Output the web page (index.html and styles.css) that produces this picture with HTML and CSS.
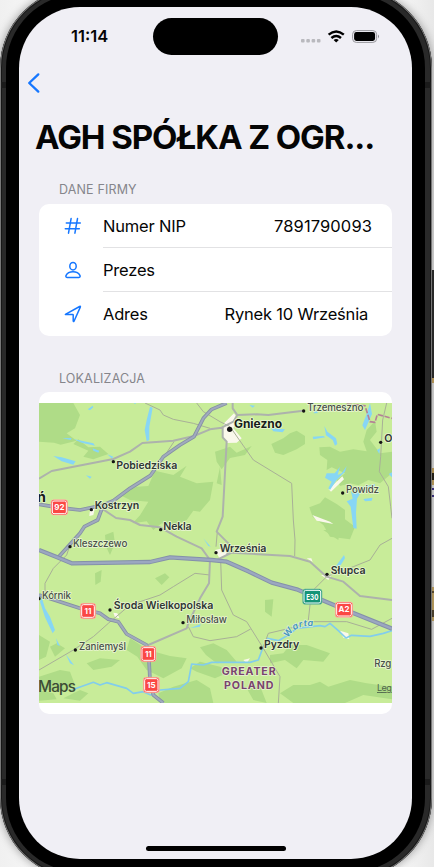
FILE: index.html
```html
<!DOCTYPE html>
<html lang="pl">
<head>
<meta charset="utf-8">
<title>Dane firmy</title>
<link rel="stylesheet" href="styles.css">
</head>
<body>
<div class="stage">
<div class="device">
<span class="seam seam-top"></span><span class="seam seam-bottom"></span>
<div class="bezel">
<main class="screen">
  <header class="status">
    <span class="time">11:14</span>
    <span class="island"></span>
    <svg class="indicators" viewBox="0 0 80 16" width="80" height="16">
      <g fill="#b9b9be"><rect x="1" y="11" width="3.6" height="3.5" rx="1"/><rect x="6.3" y="11" width="3.6" height="3.5" rx="1"/><rect x="11.6" y="11" width="3.6" height="3.5" rx="1"/><rect x="16.9" y="11" width="3.6" height="3.5" rx="1"/></g>
      <g fill="none" stroke="#000" stroke-width="2.4"><path d="M28.6 6.7Q36.2 .2 43.8 6.7"/><path d="M31.4 10Q36.2 5.8 41 10"/></g>
      <path d="M33.6 12Q36.2 9.8 38.8 12L36.2 14.6Z"/>
      <rect x="52.6" y="2.6" width="24" height="11.8" rx="3.7" fill="none" stroke="#98989d"/>
      <rect x="54.1" y="4.1" width="21" height="8.8" rx="2.3"/><path d="M78 6.6Q80 8.5 78 10.4Z" fill="#89898e"/>
    </svg>
  </header>
  <nav class="nav"><svg width="14" height="22" viewBox="0 0 14 22"><path d="M11.3 2.4 2.2 11l9.1 8.6" fill="none" stroke="#1677ff" stroke-width="2.3" stroke-linecap="round" stroke-linejoin="round"/></svg></nav>
  <h1 class="title">AGH SPÓŁKA Z OGR...</h1>
  <h2 class="section-label">DANE FIRMY</h2>
  <section class="card">
    <div class="row"><svg class="icon" viewBox="0 0 18 18"><path d="M7.1 1.6 4.5 16.2M13.5 1.6 10.9 16.2M2.3 6H16.3M1.3 11.8H15.3"/></svg><div class="cell"><span>Numer NIP</span><span class="nip">7891790093</span></div></div>
    <div class="row"><svg class="icon" viewBox="0 0 18 18"><ellipse cx="9" cy="5.2" rx="3.2" ry="3.7"/><path d="M3.1 16.4H14.9C16.2 16.4 16.4 15.4 15.9 14.4 14.7 12 12.2 10.8 9 10.8S3.3 12 2.1 14.4C1.6 15.4 1.8 16.4 3.1 16.4Z"/></svg><div class="cell"><span class="prezes">Prezes</span></div></div>
    <div class="row"><svg class="icon" viewBox="0 0 18 18"><path d="M1.4 9.4 15.6 1.5Q16.8 1 16.3 2.1L10 16.2Q9.3 17 9.2 16V9.9Q9.2 9.4 8.7 9.4Z"/></svg><div class="cell"><span>Adres</span><span class="address">Rynek 10 Września</span></div></div>
  </section>
  <h2 class="section-label second">LOKALIZACJA</h2>
  <section class="card map-card">
    <svg class="map" viewBox="27 129 1059 900">
      <rect x="27" y="129" width="1059" height="900" fill="#c8ec99"/>
      <g class="forest">
        <path d="M27 129H130L150 165 135 205 110 220 140 242 92 254 72 248 27 245ZM145 238 175 262 210 260 235 282 190 298 160 290 175 272 130 252Z"/>
        <path d="M375 332 430 345 470 317 450 350 500 370 550 365 540 420 510 455 490 452 470 480 430 498 395 490 370 510 350 484 308 490 330 466 355 425 300 420 270 405 320 380 355 378Z"/>
        <path d="M724 252 760 235 780 220 800 212 825 228 825 252 800 268 760 285 735 278Z"/>
        <path d="M868 262 900 260 930 275 970 268 1010 274 1000 245 1010 210 1035 183 1040 215 1020 240 1050 280 1086 275V340L1050 370 1015 360 985 376 960 370 930 378 920 360 945 340 905 322 890 330 892 300 870 285Z"/>
        <path d="M838 442 870 430 885 412 920 432 945 450 945 478 975 500 960 538 900 530 880 495 848 470Z"/>
        <path d="M555 275 600 260 620 278 665 258 645 285 600 294 575 328 560 305ZM570 320 560 370 575 375ZM225 525 250 515 255 550 240 585 228 560ZM195 640 215 630 212 665 196 675ZM375 655 405 640 418 652 395 675ZM705 720 730 718 725 770 705 755ZM880 510 930 510 925 540Z"/>
        <path d="M27 825 60 845 48 890 27 900ZM60 860 80 850 105 865 75 890ZM170 910 210 895 270 900 245 920 190 930ZM90 930 120 935 135 975 105 990 30 990 27 950Z"/>
        <path d="M300 835 355 870 420 888 470 895 455 925 400 955 350 930 322 890 290 870Z"/>
        <path d="M480 925 510 905 570 920 600 935 555 955 500 935ZM385 1000 430 980 500 960 540 985 550 1029H390ZM27 990 70 1000 80 1018 27 1022ZM510 862 550 850 590 870 620 905 560 910 528 885Z"/>
        <path d="M720 885 760 880 780 855 830 855 900 880 880 905 820 900 800 925 765 900 720 910Z"/>
        <path d="M750 1000 790 975 840 975 870 965 895 980 960 960 1010 970 1086 980V1018L1000 1005 945 1029H790ZM650 985 690 978 710 1029 670 1020ZM100 1015 150 990 175 1000 150 1022Z"/>
      </g>
      <g fill="#faf8ec">
        <path d="M582 190 612 160 622 175 610 205 635 235 620 248 590 249 577 225Z"/><path d="M180 450 195 443 190 465 178 468ZM250 758 262 760 268 775 255 772ZM555 570 585 563 600 580 570 598ZM873 645 905 645 895 660ZM830 595 844 595 848 606ZM896 388 937 349 942 358 903 395ZM847 465 900 485 910 492 860 482ZM930 812 940 833 958 838 955 820ZM640 900 660 895 650 910Z"/>
      </g>
      <g class="water">
        <path d="M360 140 368 143 358 200 358 240 350 244 344 210 350 180ZM173 148 188 137 190 142 180 151ZM97 235 125 234 122 240ZM130 237 190 250 195 257 155 248ZM188 265 208 272 205 278 190 272ZM70 288 95 292 137 304 130 314 95 304ZM168 346 185 350 180 356ZM308 126 322 126 315 132ZM232 283 250 290 246 296Z"/>
        <path d="M722 204 765 208 758 217 730 214ZM848 230 880 228 886 232 850 238ZM883 198 892 215 918 235 922 252 915 257 908 240 888 226ZM850 160 868 142 862 160ZM658 135 675 137 668 143ZM1020 129 1026 162 1005 210 997 196 1010 162Z"/>
        <path d="M885 353 890 340 914 340 930 320 923 345 935 340 950 318 945 335 920 360 900 390 895 385 905 365Z"/>
        <path d="M963 395 1000 380 1035 372 1034 381 995 393 981 416 978 458 980 506 970 504 962 440 950 424 968 416ZM1000 417 1028 413 1025 422 1005 424ZM1076 342 1086 337V352ZM1041 270 1050 265 1048 282Z"/>
        <path d="M35 712 45 745 60 770 75 810 68 820 45 772 30 725ZM78 835 90 858 82 855ZM107 882 132 916 120 910ZM918 618 942 585 945 595 928 622ZM520 535 542 560 535 558ZM480 805 512 792 510 800Z"/>
        <path class="river" d="M125 990 190 967 210 975 230 968 290 985 310 1000 340 995 362 1005 390 990 450 985 475 965 485 912 520 915 545 907 660 907 685 900 698 865 712 835 745 842 775 825 800 805 870 797 885 800 900 790 925 812 948 834 965 826 1020 829 1060 820 1086 812"/>
      </g>
      <path class="border" d="M950 132 1005 137 1020 185 1035 187 1042 163 1086 175"/>
      <g class="thin">
        <path d="M345 129 390 150 400 165 430 178 490 190 540 205M500 129 520 155 570 185 600 200 670 300 785 370 790 480 795 540 794 588M410 278 432 245"/>
        <path d="M1070 129 1058 180 1052 290 1048 335 1075 380 1082 440 1086 475M45 700 45 670 70 625 110 585 120 555M27 930 130 870 190 830 235 790 300 735 390 705 430 680 495 640 540 645"/>
        <path d="M572 600 575 690 610 765 650 785 700 865 750 950 745 1029M475 800 490 830 540 842 620 830 662 807M700 860 715 820 800 800 830 785 950 785 1025 808 1086 775M835 780 840 735 845 695 890 650 970 620 1020 600 1050 555 1086 535M562 515 558 560"/>
      </g>
      <g class="minor">
        <path d="M27 356 65 333 200 307 250 297 300 275 337 249 430 242 492 228 540 208 575 203 610 185 622 165 680 163 715 165 820 152M608 129V145L622 165M578 203V232L590 245 587 300 578 470 560 515 605 560 590 585M215 445 258 474 300 480 330 495 390 502 440 530 515 565 540 600 537 670 510 715 475 790 470 805 355 855"/>
        <path d="M560 600 605 578 780 588 840 605 890 650 940 665 990 708 1086 720"/>
      </g>
      <g><path class="major-edge" d="M27 433 87 443 150 450 220 435 250 422 300 385 362 346 400 290 450 255 492 230 520 175 545 148 590 129M220 435 203 480 163 500 150 520 85 592M27 705 150 745 210 760 235 778 265 785 290 822 350 855 357 900 360 960 370 1005 400 1029"/><path class="major" d="M27 433 87 443 150 450 220 435 250 422 300 385 362 346 400 290 450 255 492 230 520 175 545 148 590 129M220 435 203 480 163 500 150 520 85 592M27 705 150 745 210 760 235 778 265 785 290 822 350 855 357 900 360 960 370 1005 400 1029"/></g>
      <path class="highway-edge" d="M27 570 82 592 125 610 360 606 420 592 545 600 590 605 655 634 725 668 800 688 890 726 942 748 1086 806"/>
      <path class="highway" d="M27 570 82 592 125 610 360 606 420 592 545 600 590 605 655 634 725 668 800 688 890 726 942 748 1086 806"/>
      <g fill="#151515"><circle cx="599" cy="208" r="8"/><circle cx="250" cy="305" r="5"/><circle cx="184" cy="449" r="5"/><circle cx="392" cy="509" r="5"/><circle cx="821" cy="153" r="5"/><circle cx="1052" cy="247" r="5"/><circle cx="938" cy="399" r="5"/><circle cx="120" cy="560" r="5"/><circle cx="558" cy="578" r="5"/><circle cx="891" cy="643" r="5"/><circle cx="240" cy="750" r="5"/><circle cx="459" cy="788" r="5"/><circle cx="136" cy="870" r="5"/><circle cx="693" cy="864" r="5"/><circle cx="27" cy="716" r="5"/></g>
      <g class="town">
        <text x="259" y="327" textLength="183">Pobiedziska</text><text x="194" y="448" textLength="134">Kostrzyn</text><text x="400" y="509" textLength="85">Nekla</text><text x="569" y="577" textLength="140">Września</text><text x="902" y="642" textLength="105">Słupca</text><text x="251" y="748" textLength="299">Środa Wielkopolska</text><text x="702" y="864" textLength="106">Pyzdry</text><text x="1063" y="247">O</text>
      </g>
      <g class="town village">
        <text x="832" y="153" textLength="168">Trzemeszno</text><text x="948" y="398" textLength="99">Powidz</text><text x="129" y="561" textLength="163">Kleszczewo</text><text x="36" y="717" textLength="87">Kórnik</text><text x="469" y="788" textLength="122">Miłosław</text><text x="147" y="871" textLength="141">Zaniemyśl</text><text x="1033" y="921" textLength="51">Rzg</text>
      </g>
      <text class="town city" x="612" y="204" textLength="144">Gniezno</text><text class="town edge-city" x="21" y="426">ń</text>
      <g class="region"><text x="575" y="946" textLength="162">GREATER</text><text x="582" y="987" textLength="148">POLAND</text></g>
      <path id="warta-line" d="M776 834Q789 796 850 798" fill="none"/><text class="river-name"><textPath href="#warta-line">Warta</textPath></text>
      <g class="shield">
        <rect x="63" y="419" width="50" height="46" rx="8"/><rect class="inner" x="67" y="423" width="42" height="38" rx="5"/><text x="88" y="450">92</text>
        <rect x="151" y="730" width="46" height="46" rx="8"/><rect class="inner" x="155" y="734" width="38" height="38" rx="5"/><text x="174" y="761">11</text>
        <rect x="332" y="859" width="46" height="46" rx="8"/><rect class="inner" x="336" y="863" width="38" height="38" rx="5"/><text x="355" y="890">11</text>
        <rect x="340" y="952" width="48" height="46" rx="8"/><rect class="inner" x="344" y="956" width="40" height="38" rx="5"/><text x="364" y="983">15</text>
        <rect x="916" y="726" width="52" height="46" rx="8"/><rect class="inner" x="920" y="730" width="44" height="38" rx="5"/><text x="942" y="757">A2</text>
        <rect class="green" x="818" y="687" width="58" height="46" rx="8"/><rect class="inner" x="822" y="691" width="50" height="38" rx="5"/><text x="847" y="719" textLength="36" lengthAdjust="spacingAndGlyphs">E30</text>
      </g>
      <text class="maps" x="24" y="996" textLength="114">Maps</text>
      <text class="legal" x="1041" y="993" textLength="44">Leg</text>
    </svg>
  </section>
  <span class="home"></span>
</main>
</div>
</div>
</div>
</body>
</html>
```
FILE: styles.css
```css
* { box-sizing: border-box; }
body { margin: 0; overflow: hidden; font-family: Inter, "Liberation Sans", sans-serif; }
.stage {
  display: flex;
  width: 434px;
  height: 867px;
  overflow: hidden;
  background:
    linear-gradient(#0000 270px, #303030 270px 378px, #d0ac65 378px 383px, #0000 383px 468px, #cba962 468px 473px, #2b261d 473px 480px, #d0ae68 480px 485px, #0000 485px 488px, #41358b 488px 490px, #0000 490px 495px, #41358b 495px 497px, #0000 497px 587px, #d0b16c 587px 591px, #665637 591px 593px, #d0b16c 593px 610px, #574a34 610px 617px, #d0b16c 617px 621px, #0000 621px) right / 3px 100% no-repeat,
    linear-gradient(90deg, #f0f0f0, #f6f6f6 8% 92%, #e8e8e8);
}
.device {
  position: relative;
  flex: none;
  width: 432px;
  height: 890px;
  margin-top: -12px;
  padding: 6px;
  border-radius: 80px;
  background: #292929;
  box-shadow: inset 0 0 0 1px #777, inset 0 0 0 2px #171717, 0 0 10px #0006;
}
.seam { position: absolute; left: 1px; right: 1px; height: 6px; background: #1b1b1b; }
.seam-top { top: 94px; }
.seam-bottom { top: 791px; }
.bezel { position: relative; width: 419px; height: 878px; padding: 13px; border-radius: 74px; background: #000; }
.screen {
  display: flex;
  flex-direction: column;
  width: 393px;
  height: 852px;
  border-radius: 61px;
  background: #f0eff5;
  color: #050505;
}
.status { display: flex; height: 55px; padding-top: 11px; }
.time { width: 134px; padding-left: 52px; font-size: 16.5px; line-height: 37px; font-weight: 600; letter-spacing: 0; }
.island { width: 125px; height: 37px; border-radius: 19px; background: #000; }
.indicators { margin: 10px 0 0 22px; }
.nav { height: 41px; padding: 10px 0 0 8px; }
.title { margin: 0; height: 68px; padding-left: 16px; font-size: 33px; line-height: 68px; font-weight: 700; letter-spacing: -1.08px; white-space: nowrap; }
.section-label { margin: 0; height: 33px; padding: 11px 0 0 40px; font-size: 12.5px; line-height: 16px; font-weight: 400; color: #85858b; letter-spacing: .15px; }
.second { height: 56.5px; padding-top: 35px; }
.card { flex: none; width: 353px; height: 131.5px; margin-left: 20px; border-radius: 10px; background: #fff; overflow: hidden; }
.row { display: flex; height: 43.83px; align-items: center; padding-left: 25px; }
.icon { width: 18px; height: 18px; margin-right: 21px; fill: none; stroke: #1677ff; stroke-width: 1.5; stroke-linecap: round; stroke-linejoin: round; }
.cell { display: flex; flex: 1; height: 100%; align-items: center; justify-content: space-between; padding: 1px 20px 0 0; border-bottom: 1px solid #e2e2e4; font-size: 16.5px; letter-spacing: -.2px; }
.row:last-child .cell { padding-top: 0; border-bottom: 0; }
.nip { letter-spacing: .1px; }
.address { margin-right: 4px; }
.map-card { height: 322px; padding: 11px 0; }
.map { display: block; width: 353px; height: 300px; }
.forest { fill: #afdc87; }
.water { fill: #87d6f5; }
.river { fill: none; stroke: #82cdec; stroke-width: 5; stroke-linejoin: round; }
.border { fill: none; stroke: #b48296; stroke-width: 5; stroke-dasharray: 16 5; }
.thin, .minor, .major, .major-edge, .highway, .highway-edge { fill: none; stroke-linejoin: round; }
.thin { stroke: #a8b097; stroke-width: 3; }
.minor { stroke: #adb2ac; stroke-width: 6; }
.major-edge { stroke: #8590a4; stroke-width: 11; }
.major { stroke: #a0aabd; stroke-width: 6; }
.highway-edge { stroke: #8490aa; stroke-width: 13; }
.highway { stroke: #9ba7c0; stroke-width: 7; }
.town { font-size: 32px; font-weight: 600; fill: #303735; stroke: #e8f5d2; stroke-width: 5; stroke-linejoin: round; paint-order: stroke; }
.village { font-size: 29.5px; font-weight: 500; fill: #495149; }
.city { font-size: 36px; font-weight: 700; fill: #171b19; }
.edge-city { font-size: 43px; font-weight: 700; fill: #171b19; }
.region { font-size: 32px; font-weight: 700; fill: #78456d; stroke: #e7f2d2; stroke-width: 4; paint-order: stroke; }
.river-name { font-size: 27px; font-weight: 600; font-style: italic; letter-spacing: 2px; fill: #4293bf; stroke: #e0f2d6; stroke-width: 4; paint-order: stroke; }
.shield { fill: #fa4744; stroke: #ffc3b0; stroke-width: 2; font-size: 24px; font-weight: 700; text-anchor: middle; }
.shield .inner { fill: none; stroke: #fff; stroke-width: 3; }
.shield .green { fill: #159477; stroke: #78bda0; }
.shield text { fill: #fff; stroke: none; }
.maps { font-size: 46px; font-weight: 500; fill: #3c4c35; }
.legal { font-size: 27px; fill: #51664c; text-decoration: underline; }
.home { width: 140px; height: 5px; margin: auto auto 8px 127px; border-radius: 3px; background: #000; }
```
